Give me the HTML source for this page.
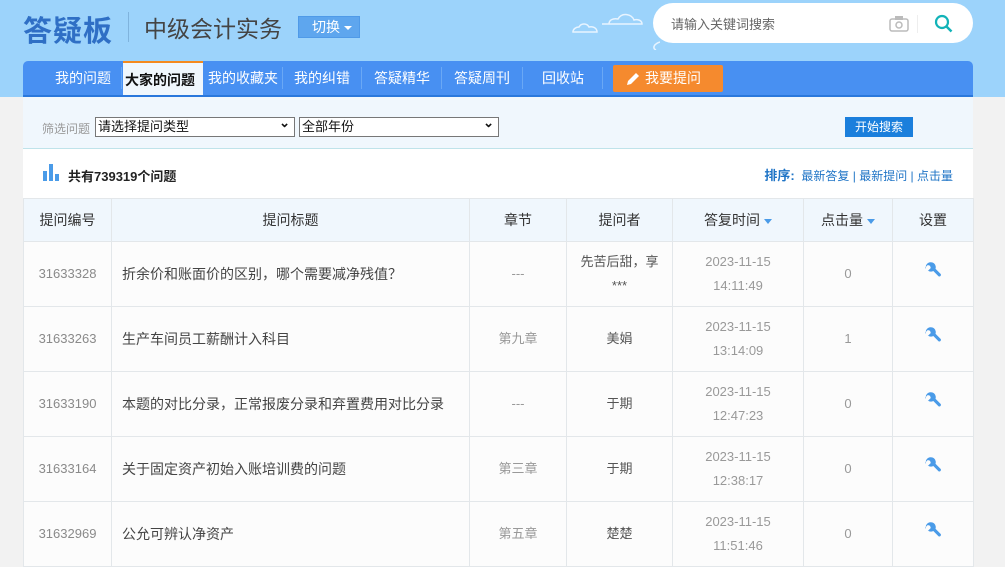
<!DOCTYPE html>
<html><head><meta charset="utf-8"><style>
*{margin:0;padding:0;box-sizing:border-box}
body{width:1005px;height:567px;overflow:hidden;background:#f2f2f2;font-family:"Liberation Sans","Noto Sans CJK SC",sans-serif;position:relative}
.top{position:absolute;left:0;top:0;width:1005px;height:97px;background:#9cd3fb}
.logo{position:absolute;left:23px;top:8px;font-size:29px;font-weight:bold;color:#2f6fc5;letter-spacing:1px}
.sep{position:absolute;left:128px;top:12px;width:1px;height:30px;background:#7fb3dd}
.sub{position:absolute;left:144px;top:10px;font-size:23px;color:#444}
.sw{position:absolute;left:298px;top:16px;width:62px;height:22px;background:#5ea6ee;border:1px solid #4f9ae8;color:#fff;font-size:14px;line-height:20px;padding-left:13px}
.sw:after{content:"";position:absolute;right:7px;top:9px;border:4px solid transparent;border-top:4px solid #fff}
.search{position:absolute;left:653px;top:3px;width:320px;height:40px;background:#fff;border-radius:20px}
.search span{position:absolute;left:18px;top:11px;font-size:13px;color:#666}
.nav{position:absolute;left:23px;top:61px;width:950px;height:36px;background:#4890f2;border-radius:5px 5px 0 0;border-bottom:2px solid #2a78dc}
.nav a{position:absolute;top:0;height:34px;line-height:34px;color:#fff;font-size:14px;text-decoration:none}
.nav i{position:absolute;top:6px;width:1px;height:22px;background:#6aa8f5}
.act{background:#f0f7fd;color:#111!important;border-top:2px solid #f58a1e;font-weight:bold;padding:0 2px}
.ask{background:#f58a2e;border-radius:2px;top:4px!important;height:27px!important;line-height:27px!important;width:110px;padding-left:32px}
.main{position:absolute;left:23px;top:97px;width:950px;height:470px;background:#fff}
.filter{height:52px;background:#f0f7fd;border-bottom:1px solid #bfe3ea;position:relative}
.filter .l{position:absolute;left:19px;top:23px;font-size:12px;color:#999}
.sel{position:absolute;top:20px;height:20px;border:1px solid #777;background:#fff;font-size:13px;line-height:18px;padding-left:2px;color:#111}
.sel:after{content:"⌄";position:absolute;right:4px;top:-4px;font-weight:bold}
.btn{position:absolute;left:822px;top:20px;width:68px;height:20px;background:#1b7fdc;color:#fff;font-size:12px;line-height:20px;text-align:center}
.sum{height:49px;position:relative}
.sum b{position:absolute;left:45px;top:17px;font-size:13px;color:#222}
.bars{position:absolute;left:20px;top:15px}
.sort{position:absolute;right:20px;top:16px;font-size:12px;color:#1f74c6}
table{border-collapse:collapse;width:950px;table-layout:fixed}
td,th{border:1px solid #e3e7ea;text-align:center;font-weight:normal}
th{height:43px;background:#f0f7fd;font-size:14px;color:#333}
td{height:65px;background:#fcfcfc;font-size:13px;color:#555;line-height:24px}
td.n{color:#8a8a8a}
td.t{text-align:left;padding-left:10px;font-size:14px;color:#444}
td.d{color:#999}
.ar{display:inline-block;border:4px solid transparent;border-top:5px solid #4a9be8;margin-left:4px;vertical-align:-3px}
</style></head><body>
<svg width="0" height="0" style="position:absolute"><symbol id="w" viewBox="0 0 18 18"><path d="M6.5 1.2A5 5 0 0 0 2 7.8L1 6.8 3.8 4l2.2.8.8 2.2-2.8 2.8L3.8 9.5A5 5 0 0 0 9.3 10l5.2 5.2a1.6 1.6 0 0 0 2.2-2.2L11.5 7.8A5 5 0 0 0 6.5 1.2z" fill="#4a9be8"/></symbol></svg>
<div class="top">
<svg style="position:absolute;left:570px;top:0" width="90" height="50"><g fill="none" stroke="#e8f4ff" stroke-width="1.5"><path d="M3 32h24c0-4-4-6-8-5-2-4-8-4-10 0-3 0-6 2-6 5z"/><path d="M32 24h40c0-4-5-5-8-4-2-6-12-8-16-1-5-1-9 1-9 5z"/><path d="M90 42c-6 2-8 6-4 8" /></g></svg>
<div class="logo">答疑板</div><div class="sep"></div><div class="sub">中级会计实务</div><div class="sw">切换</div>
<div class="search"><span>请输入关键词搜索</span>
<svg style="position:absolute;left:236px;top:12px" width="20" height="17"><rect x="1" y="4" width="18" height="12" rx="2" fill="none" stroke="#bbb" stroke-width="1.5"/><rect x="6" y="1" width="8" height="4" fill="#bbb"/><circle cx="10" cy="10" r="3" fill="none" stroke="#bbb" stroke-width="1.5"/></svg>
<div style="position:absolute;left:264px;top:12px;width:1px;height:18px;background:#eee"></div>
<svg style="position:absolute;left:281px;top:11px" width="20" height="20"><circle cx="8" cy="8" r="6" fill="none" stroke="#12b3b8" stroke-width="2.2"/><path d="M12.5 12.5l5 5" stroke="#12b3b8" stroke-width="2.5"/></svg>
</div>
</div>
<div class="nav">
<a style="left:32px">我的问题</a><i style="left:98px"></i>
<a class="act" style="left:100px;width:80px">大家的问题</a>
<a style="left:185px">我的收藏夹</a><i style="left:259px"></i>
<a style="left:271px">我的纠错</a><i style="left:338px"></i>
<a style="left:351px">答疑精华</a><i style="left:418px"></i>
<a style="left:431px">答疑周刊</a><i style="left:499px"></i>
<a style="left:519px">回收站</a><i style="left:579px"></i>
<a class="ask" style="left:590px"><svg style="position:absolute;left:12px;top:6px" width="16" height="16"><path d="M2 14l1-4 8-8 3 3-8 8z" fill="#fff"/></svg>我要提问</a>
</div>
<div class="main">
<div class="filter"><span class="l">筛选问题</span>
<div class="sel" style="left:72px;width:200px">请选择提问类型</div>
<div class="sel" style="left:276px;width:200px">全部年份</div>
<div class="btn">开始搜索</div></div>
<div class="sum"><svg class="bars" width="18" height="17"><rect x="0" y="7" width="4" height="10" fill="#4a9be8"/><rect x="6" y="0" width="4" height="17" fill="#4a9be8"/><rect x="12" y="10" width="4" height="7" fill="#4a9be8"/></svg><b>共有739319个问题</b>
<div class="sort"><b style="color:#1f74c6;font-weight:bold;position:static">排序:</b> &nbsp;最新答复 | 最新提问 | 点击量</div></div>
<table>
<colgroup><col style="width:88px"><col style="width:358px"><col style="width:97px"><col style="width:106px"><col style="width:131px"><col style="width:89px"><col style="width:81px"></colgroup>
<tr><th>提问编号</th><th>提问标题</th><th>章节</th><th>提问者</th><th>答复时间<span class="ar"></span></th><th>点击量<span class="ar"></span></th><th>设置</th></tr>
<tr><td class="n">31633328</td><td class="t">折余价和账面价的区别，哪个需要减净残值？</td><td class="d">---</td><td>先苦后甜，享<br>***</td><td class="d">2023-11-15<br>14:11:49</td><td class="d">0</td><td><svg width="18" height="18"><use href="#w"/></svg></td></tr>
<tr><td class="n">31633263</td><td class="t">生产车间员工薪酬计入科目</td><td class="d">第九章</td><td>美娟</td><td class="d">2023-11-15<br>13:14:09</td><td class="d">1</td><td><svg width="18" height="18"><use href="#w"/></svg></td></tr>
<tr><td class="n">31633190</td><td class="t">本题的对比分录，正常报废分录和弃置费用对比分录</td><td class="d">---</td><td>于期</td><td class="d">2023-11-15<br>12:47:23</td><td class="d">0</td><td><svg width="18" height="18"><use href="#w"/></svg></td></tr>
<tr><td class="n">31633164</td><td class="t">关于固定资产初始入账培训费的问题</td><td class="d">第三章</td><td>于期</td><td class="d">2023-11-15<br>12:38:17</td><td class="d">0</td><td><svg width="18" height="18"><use href="#w"/></svg></td></tr>
<tr><td class="n">31632969</td><td class="t">公允可辨认净资产</td><td class="d">第五章</td><td>楚楚</td><td class="d">2023-11-15<br>11:51:46</td><td class="d">0</td><td><svg width="18" height="18"><use href="#w"/></svg></td></tr>
</table>
</div>
</body></html>
